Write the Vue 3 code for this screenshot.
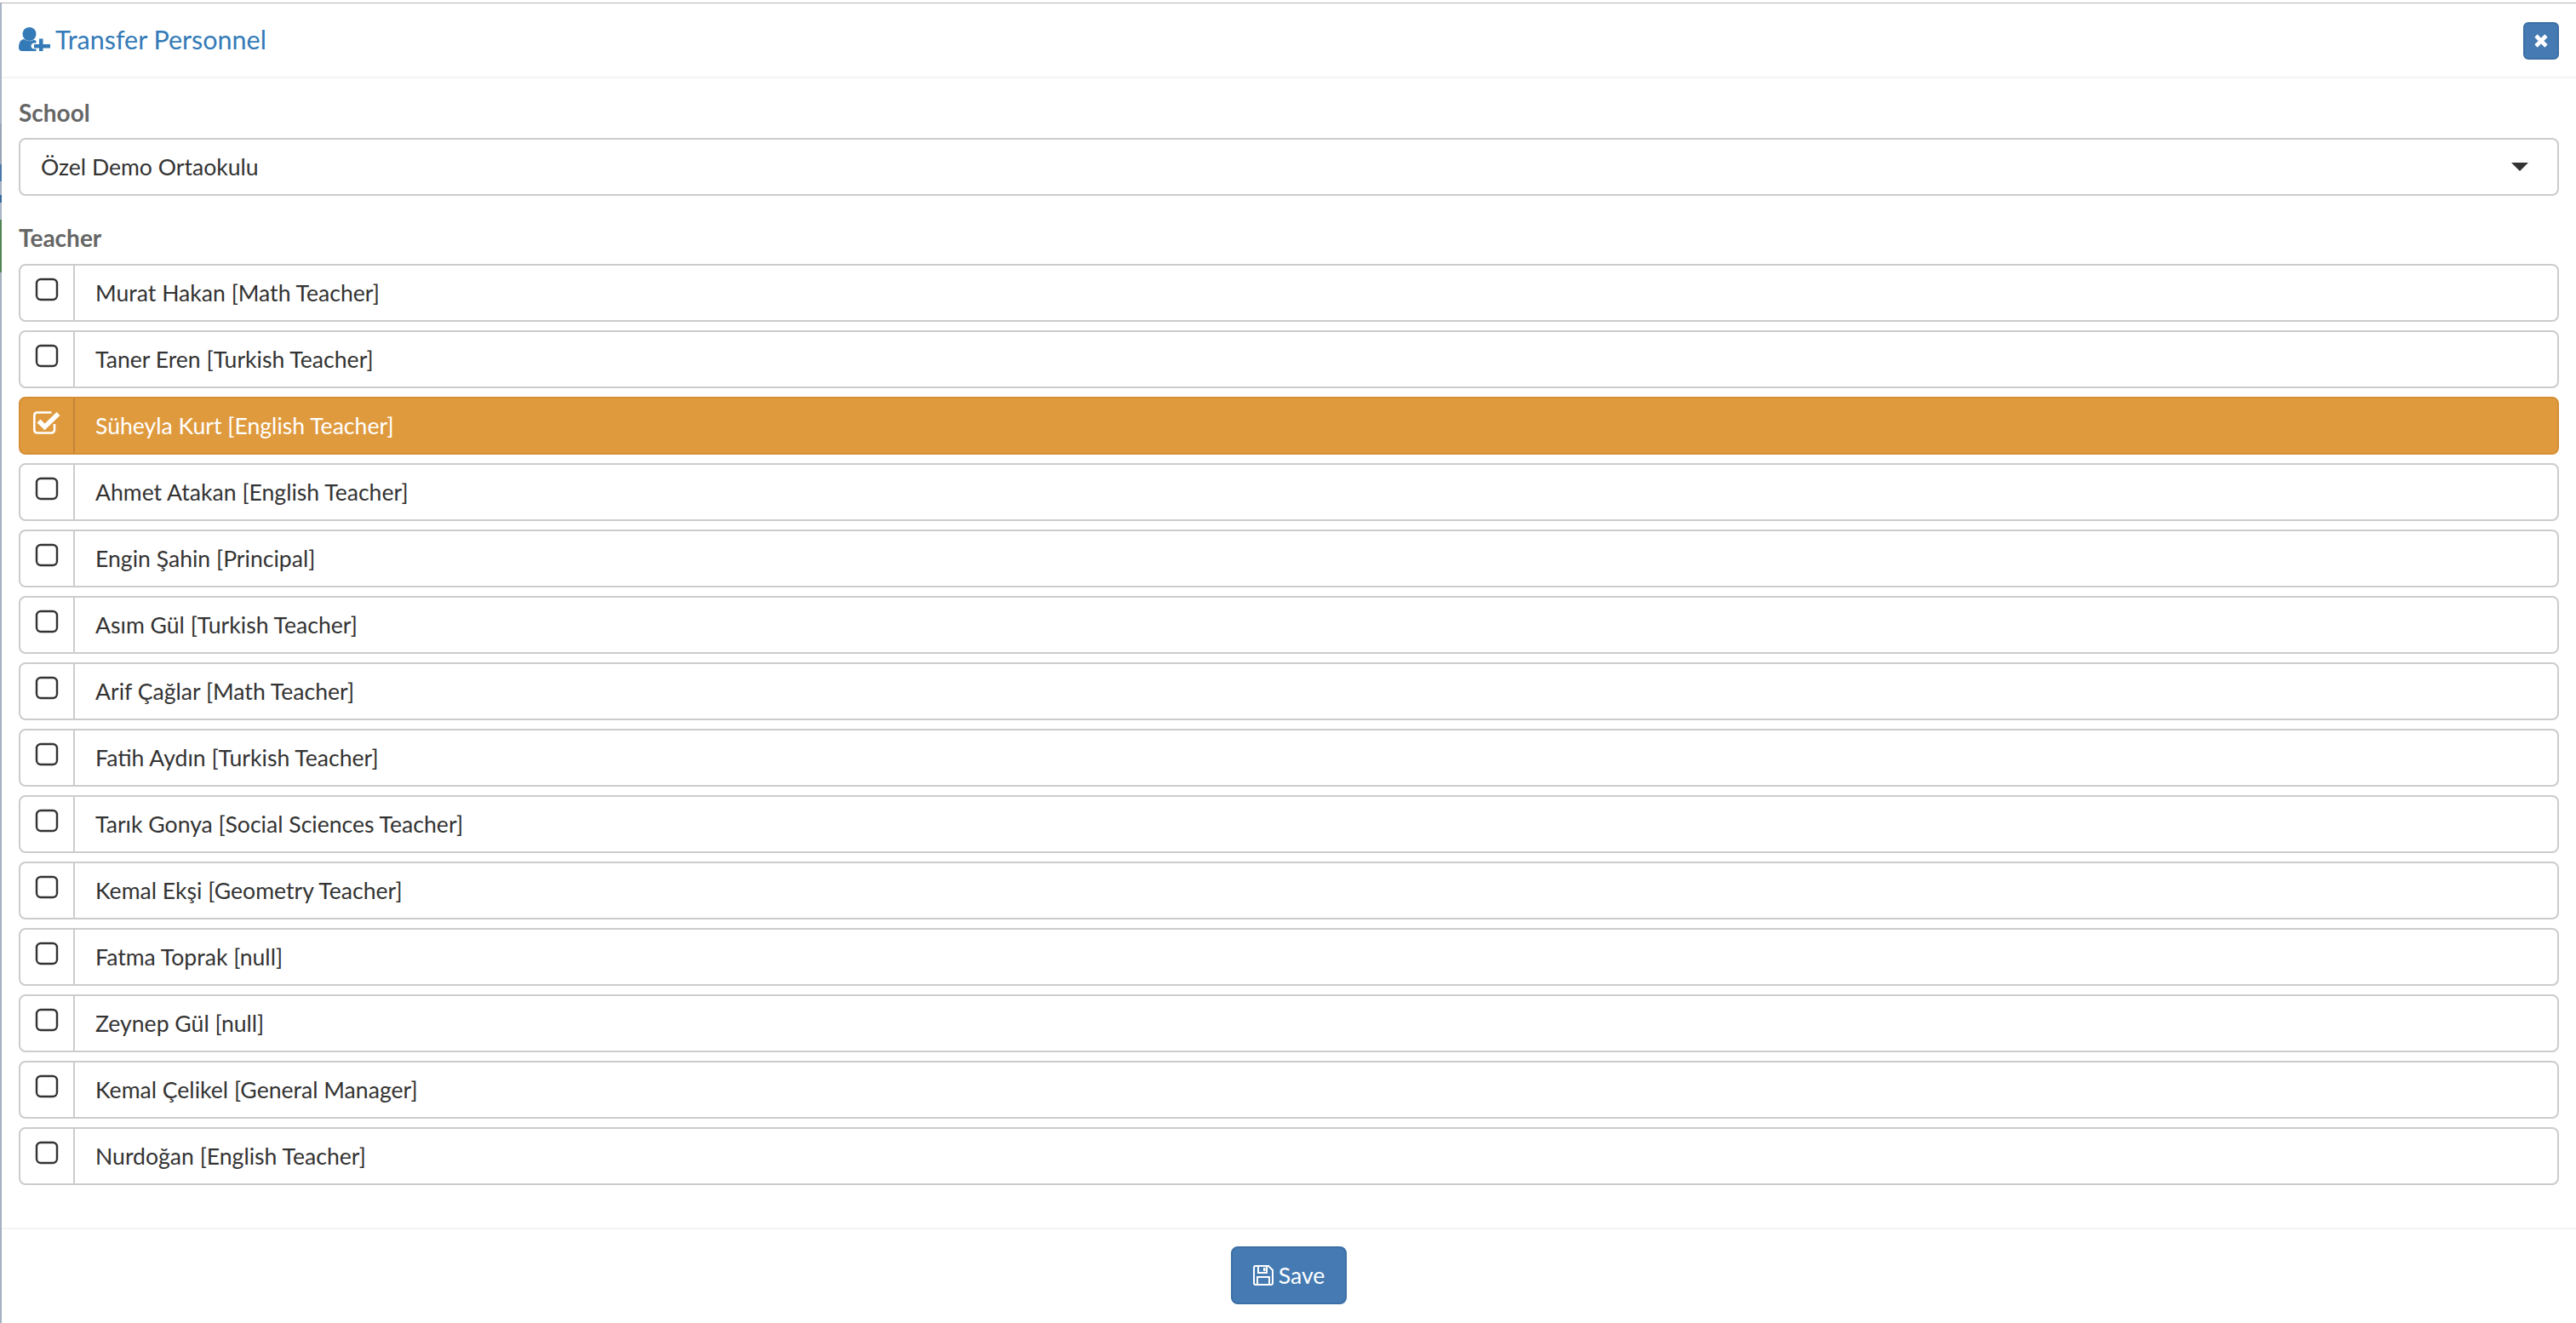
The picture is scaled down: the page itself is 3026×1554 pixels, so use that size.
<script setup>
const teachers = [
  { name: "Murat Hakan [Math Teacher]" },
  { name: "Taner Eren [Turkish Teacher]" },
  { name: "Süheyla Kurt [English Teacher]", selected: true },
  { name: "Ahmet Atakan [English Teacher]" },
  { name: "Engin Şahin [Principal]" },
  { name: "Asım Gül [Turkish Teacher]" },
  { name: "Arif Çağlar [Math Teacher]" },
  { name: "Fatih Aydın [Turkish Teacher]" },
  { name: "Tarık Gonya [Social Sciences Teacher]" },
  { name: "Kemal Ekşi [Geometry Teacher]" },
  { name: "Fatma Toprak [null]" },
  { name: "Zeynep Gül [null]" },
  { name: "Kemal Çelikel [General Manager]" },
  { name: "Nurdoğan [English Teacher]" },
];
</script>

<template>
  <div class="page">
    <div class="backdrop"></div>
    <div class="modal">
      <header class="modal-head">
        <h4 class="title">
          <svg class="user-icon" viewBox="0 0 37 28" width="37" height="28">
            <circle cx="12.500" cy="8" r="8" fill="#337ab7" />
            <path d="M0 24c0-6 2.500-10 6.500-10 1.500 1.300 3.500 2.200 6 2.200 2 0 3.800-.5 5-1.500 1 .2 2 .7 3 1.300v2.500h-2.500c-2 0-3.500 1.500-3.500 3.500s1.500 3.500 3.500 3.500h2.500V28H4c-2.500 0-4-1.500-4-4z" fill="#337ab7" />
            <path d="M24 13.500h4.500V20H37v4.500h-8.500V28H24v-3.500h-6V20h6z" fill="#337ab7" />
          </svg>
          <span>Transfer Personnel</span>
        </h4>
        <button class="btn close-btn" type="button">
          <svg viewBox="0 0 16 16" width="16" height="16">
            <path d="M2 2l12 12M14 2L2 14" stroke="#fff" stroke-width="4.600" fill="none" />
          </svg>
        </button>
      </header>

      <section class="modal-body">
        <label class="field-label">School</label>
        <div class="select">
          <span>Özel Demo Ortaokulu</span>
          <i class="caret"></i>
        </div>

        <label class="field-label teacher-label">Teacher</label>
        <ul class="teacher-list">
          <li
            v-for="teacher in teachers"
            :key="teacher.name"
            class="teacher"
            :class="{ selected: teacher.selected }"
          >
            <span class="check">
              <svg v-if="teacher.selected" viewBox="0 0 32 28" width="32" height="28">
                <path d="M25 16v7a3.500 3.500 0 0 1-3.500 3.500h-17A3.500 3.500 0 0 1 1.300 23V6a3.500 3.500 0 0 1 3.200-3.500h17" fill="none" stroke="#fff" stroke-width="2.600" />
                <path d="M6.500 12.500l7 7L29.500 4" fill="none" stroke="#fff" stroke-width="5.500" />
              </svg>
              <svg v-else viewBox="0 0 28 28" width="28" height="28">
                <rect x="2" y="2" width="24" height="24" rx="5" fill="none" stroke="#333" stroke-width="2.400" />
              </svg>
            </span>
            <span class="teacher-name">{{ teacher.name }}</span>
          </li>
        </ul>
      </section>

      <footer class="modal-foot">
        <button class="btn save-btn" type="button">
          <svg viewBox="0 0 24 24" width="24" height="24">
            <path d="M1 3a2 2 0 0 1 2-2h15l5 5v15a2 2 0 0 1-2 2H3a2 2 0 0 1-2-2z" fill="none" stroke="#fff" stroke-width="2" />
            <path d="M6 2v7h10V2M5 23V14h14v9" fill="none" stroke="#fff" stroke-width="2" />
            <rect x="12" y="3" width="2.500" height="4" fill="#fff" />
          </svg>
          <span>Save</span>
        </button>
      </footer>
    </div>
  </div>
</template>

<style>
html,
body {
  margin: 0;
  background: #fff;
}
</style>

<style scoped>
.page {
  box-sizing: border-box;
  width: 3026px;
  height: 1554px;
  padding-top: 3px;
  display: flex;
  overflow: hidden;
  font-family: Lato, "Noto Sans", sans-serif;
  font-size: 26.600px;
  color: #333;
}

/* what shows of the page behind the modal */
.backdrop {
  flex: 0 0 2px;
  background: linear-gradient(
    to bottom,
    #a9b5c5 0,
    #a9b5c5 142px,
    #99a4b4 142px,
    #99a4b4 190px,
    #4a78a8 190px,
    #4a78a8 210px,
    #a5b2c2 210px,
    #a5b2c2 226px,
    #3a6a9e 226px,
    #3a6a9e 235px,
    #a9b5c5 235px,
    #a9b5c5 255px,
    #4f8455 255px,
    #4f8455 317px,
    #a4b1c0 317px
  );
}

.modal {
  flex: 1;
  border-top: 1px solid #b4b4b4;
  display: flex;
  flex-direction: column;
  background: #fff;
}

.modal-head {
  box-sizing: border-box;
  flex: 0 0 88px;
  padding: 22px 20px 0 20px;
  display: flex;
  justify-content: space-between;
  align-items: flex-start;
  border-bottom: 2px solid #f4f4f4;
}

.title {
  margin: 0;
  display: flex;
  align-items: center;
  gap: 6px;
  font-size: 30.500px;
  font-weight: 400;
  line-height: 40px;
  color: #337ab7;
}

.btn {
  box-sizing: border-box;
  border: 2px solid #3c6fa5;
  border-radius: 6px;
  background: #457ab3;
  color: #fff;
  font: inherit;
  padding: 0;
  display: flex;
  align-items: center;
  justify-content: center;
}

.close-btn {
  width: 42px;
  height: 44px;
}

.modal-body {
  padding: 21px 20px 0;
  flex: 1;
}

.field-label {
  display: block;
  font-size: 28px;
  font-weight: 700;
  line-height: 38px;
  color: #666;
  margin-bottom: 11px;
}

.teacher-label {
  margin-top: 30px;
  margin-bottom: 12px;
}

.select {
  box-sizing: border-box;
  height: 68px;
  border: 2px solid #ccc;
  border-radius: 8px;
  padding: 0 24px;
  display: flex;
  align-items: center;
  justify-content: space-between;
}

.caret {
  width: 0;
  height: 0;
  border-left: 10px solid transparent;
  border-right: 10px solid transparent;
  border-top: 10px solid #333;
  margin-right: 10px;
}

.teacher-list {
  list-style: none;
  margin: 0;
  padding: 0;
  display: flex;
  flex-direction: column;
  gap: 10px;
}

.teacher {
  box-sizing: border-box;
  height: 68px;
  border: 2px solid #ccc;
  border-radius: 8px;
  display: flex;
  align-items: stretch;
}

.check {
  box-sizing: border-box;
  width: 64px;
  border-right: 2px solid #ccc;
  padding: 14px 0 0 17px;
  display: block;
}

.check svg {
  display: block;
}

.teacher-name {
  padding-left: 24px;
  display: flex;
  align-items: center;
}

.teacher.selected {
  background: #e09a3e;
  border-color: #d48f36;
  color: #fff;
}

.teacher.selected .check {
  border-right-color: #c5843a;
  padding-left: 15px;
}

.modal-foot {
  box-sizing: border-box;
  flex: 0 0 112px;
  border-top: 2px solid #f4f4f4;
  padding-top: 20px;
  display: flex;
  justify-content: center;
  align-items: flex-start;
}

.save-btn {
  width: 136px;
  height: 68px;
  gap: 6px;
  border-radius: 8px;
}
</style>
